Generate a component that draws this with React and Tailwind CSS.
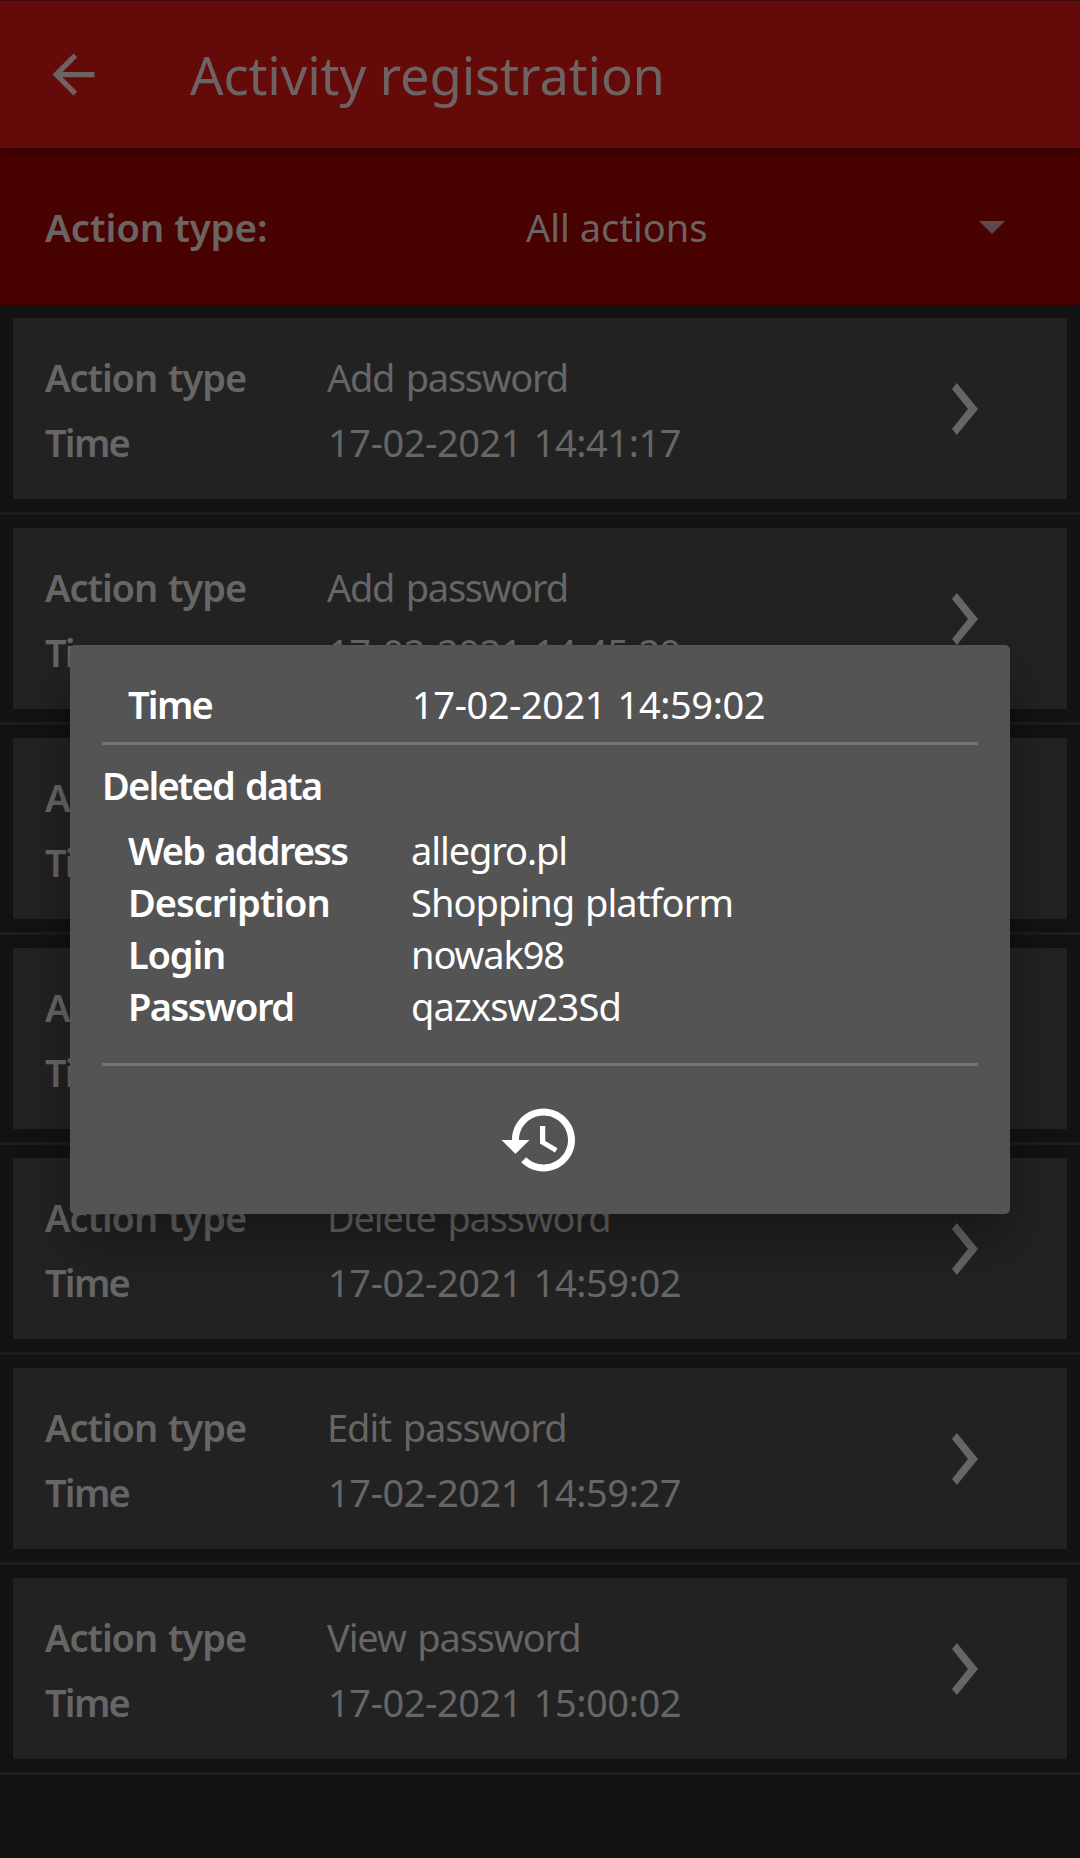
import React from "react";

const entries = [
  { type: "Add password", time: "17-02-2021 14:41:17", textStyle: "pl-[15px] tracking-[-1.28px]" },
  { type: "Add password", time: "17-02-2021 14:45:29", textStyle: "pl-[15px] tracking-[-1.28px]" },
  { type: "Add password", time: "17-02-2021 14:49:26", textStyle: "pl-[15px] tracking-[-1.28px]" },
  { type: "Add password", time: "17-02-2021 14:54:10", textStyle: "pl-[15px] tracking-[-1.28px]" },
  { type: "Delete password", time: "17-02-2021 14:59:02", textStyle: "pl-[15px] tracking-[-1.15px]" },
  { type: "Edit password", time: "17-02-2021 14:59:27", textStyle: "pl-[15px] tracking-[-1.05px]" },
  { type: "View password", time: "17-02-2021 15:00:02", textStyle: "pl-[15px] tracking-[-1.13px]" },
];

const details = [
  { label: "Web address", value: "allegro.pl", labelStyle: "pl-px tracking-[-1.75px]", valueStyle: "tracking-[-1.1px]" },
  { label: "Description", value: "Shopping platform", labelStyle: "pl-px tracking-[-1px]", valueStyle: "tracking-[-0.95px]" },
  { label: "Login", value: "nowak98", labelStyle: "pl-px tracking-[-1.2px]", valueStyle: "tracking-[-1.1px]" },
  { label: "Password", value: "qazxsw23Sd", labelStyle: "pl-px tracking-[-1.5px]", valueStyle: "tracking-[-0.85px]" },
];

function AppBar() {
  return (
    <header className="relative z-10 flex h-[148px] items-center border-t border-[#3c0c0c] bg-[#640a09] shadow-[0_3px_9px_rgba(0,0,0,0.4)]">
      <svg viewBox="0 0 24 24" className="ml-[42px] h-[63px] w-[63px] fill-[#6d6363]">
        <path d="M20 11H7.83l5.59-5.59L12 4l-8 8 8 8 1.41-1.41L7.83 13H20v-2z" />
      </svg>
      <h1 className="ml-[85px] pt-px text-[52.5px] leading-[72px] tracking-[-0.14px] whitespace-nowrap text-[#6e6363]">
        Activity registration
      </h1>
    </header>
  );
}

function FilterBar() {
  return (
    <div className="flex h-[157px] items-center bg-[#480202] pl-[45px] text-[#6c6363]">
      <span className="w-[481px] pt-px text-[38.5px] leading-[52px] font-semibold tracking-[-0.13px]">Action type:</span>
      <span className="w-[453px] text-[38px] leading-[52px]">All actions</span>
      <svg viewBox="0 0 26 13" className="mt-px h-[13px] w-[26px] fill-[#5e4a4a]">
        <path d="M0 0h26L13 13z" />
      </svg>
    </div>
  );
}

function EntryCard({ entry }) {
  return (
    <li className="border-b-3 border-[#1c1c1c] px-[13px] py-[13px]">
      <div className="flex h-[181px] items-center bg-[#222222] pl-8 text-[38px] leading-[52px] whitespace-nowrap">
        <div className="flex w-[907px] flex-col gap-[13px] pt-px">
          <div className="flex">
            <span className="w-[267px] font-semibold tracking-[-1.05px] [word-spacing:2px]">Action type</span>
            <span className={"[word-spacing:3px] " + entry.textStyle}>{entry.type}</span>
          </div>
          <div className="flex">
            <span className="w-[283px] font-semibold tracking-[-1.75px]">Time</span>
            <span className="tracking-[-0.42px] [word-spacing:2px]">{entry.time}</span>
          </div>
        </div>
        <svg viewBox="0 0 26 52" className="h-[52px] w-[26px] fill-[#666666]">
          <path d="M4.8 0 26 26 4.8 52 0 46 16 26 0 6z" />
        </svg>
      </div>
    </li>
  );
}

function DetailsDialog() {
  return (
    <section className="h-[569px] w-[940px] rounded-[5px] bg-[#545454] px-8 pt-[33px] text-[38px] leading-[52px] whitespace-nowrap text-white shadow-[0_26px_50px_rgba(0,0,0,0.32)]">
      <div className="flex pl-[26px]">
        <span className="w-[284px] font-semibold tracking-[-1.75px]">Time</span>
        <span className="tracking-[-0.42px] [word-spacing:2px]">17-02-2021 14:59:02</span>
      </div>
      <hr className="mt-3 h-[3px] border-0 bg-[#737373]" />
      <h2 className="mt-[14px] font-semibold tracking-[-1.8px] [word-spacing:3px]">Deleted data</h2>
      <dl className="mt-[13px] flex flex-col pl-[25px]">
        {details.map((d) => (
          <div key={d.label} className="flex [word-spacing:2px]">
            <dt className={"w-[284px] font-semibold " + d.labelStyle}>{d.label}</dt>
            <dd className={d.valueStyle}>{d.value}</dd>
          </div>
        ))}
      </dl>
      <hr className="mt-[31px] h-[3px] border-0 bg-[#737373]" />
      <div className="flex justify-center pt-8">
        <svg viewBox="0 0 24 24" className="h-[84px] w-[84px] fill-white">
          <path d="M13 3c-4.97 0-9 4.03-9 9H1l3.89 3.89.07.14L9 12H6c0-3.87 3.13-7 7-7s7 3.13 7 7-3.13 7-7 7c-1.93 0-3.68-.79-4.94-2.06l-1.42 1.42C8.27 19.99 10.51 21 13 21c4.97 0 9-4.03 9-9s-4.03-9-9-9zm-1 5v5l4.28 2.54.72-1.21-3.5-2.08V8H12z" />
        </svg>
      </div>
    </section>
  );
}

export default function App() {
  return (
    <div className="relative h-[1858px] w-[1080px] overflow-hidden bg-[#121212] font-['Noto_Sans',sans-serif]">
      <AppBar />
      <FilterBar />
      <ul className="text-[#666666]">
        {entries.map((entry) => (
          <EntryCard key={entry.time} entry={entry} />
        ))}
      </ul>
      <div className="absolute inset-0 z-20 flex items-start justify-center pt-[645px]">
        <DetailsDialog />
      </div>
    </div>
  );
}
